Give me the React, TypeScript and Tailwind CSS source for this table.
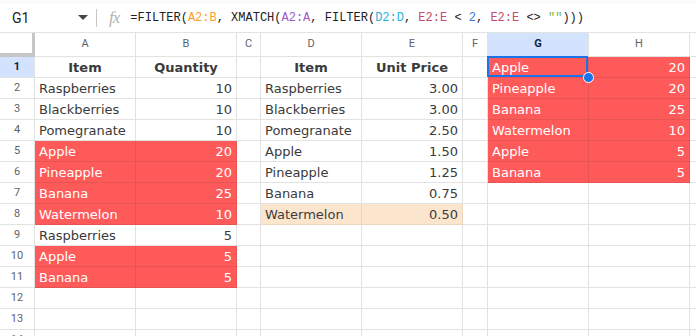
import React from 'react'

type Cell = { t?: string; bold?: boolean; right?: boolean; center?: boolean; fill?: 'red' | 'orange' }

const COLS = ['A', 'B', 'C', 'D', 'E', 'F', 'G', 'H', '']

const L = (t: string, fill?: 'red' | 'orange'): Cell => ({ t, fill })
const R = (t: string, fill?: 'red' | 'orange'): Cell => ({ t, right: true, fill })
const H = (t: string): Cell => ({ t, bold: true, center: true })
const E: Cell = {}

// rows 1..14, columns A..I
const ROWS: Cell[][] = [
  [H('Item'), H('Quantity'), E, H('Item'), H('Unit Price'), E, L('Apple', 'red'), R('20', 'red'), E],
  [L('Raspberries'), R('10'), E, L('Raspberries'), R('3.00'), E, L('Pineapple', 'red'), R('20', 'red'), E],
  [L('Blackberries'), R('10'), E, L('Blackberries'), R('3.00'), E, L('Banana', 'red'), R('25', 'red'), E],
  [L('Pomegranate'), R('10'), E, L('Pomegranate'), R('2.50'), E, L('Watermelon', 'red'), R('10', 'red'), E],
  [L('Apple', 'red'), R('20', 'red'), E, L('Apple'), R('1.50'), E, L('Apple', 'red'), R('5', 'red'), E],
  [L('Pineapple', 'red'), R('20', 'red'), E, L('Pineapple'), R('1.25'), E, L('Banana', 'red'), R('5', 'red'), E],
  [L('Banana', 'red'), R('25', 'red'), E, L('Banana'), R('0.75'), E, E, E, E],
  [L('Watermelon', 'red'), R('10', 'red'), E, L('Watermelon', 'orange'), R('0.50', 'orange'), E, E, E, E],
  [L('Raspberries'), R('5'), E, E, E, E, E, E, E],
  [L('Apple', 'red'), R('5', 'red'), E, E, E, E, E, E, E],
  [L('Banana', 'red'), R('5', 'red'), E, E, E, E, E, E, E],
  [E, E, E, E, E, E, E, E, E],
  [E, E, E, E, E, E, E, E, E],
  [E, E, E, E, E, E, E, E, E],
]

function DataCell({ c, selected }: { c: Cell; selected?: boolean }) {
  const bg =
    c.fill === 'red'
      ? 'bg-[#ff5a5a] text-white border-[#e85454]'
      : c.fill === 'orange'
        ? 'bg-[#fce5cd] text-[#3c3c3c] border-[#ecd6bf]'
        : 'bg-white text-[#3a3a3a] border-[#e2e2e2]'
  const align = c.center ? 'justify-center' : c.right ? 'justify-end' : 'justify-start'
  return (
    <div
      className={`relative h-[21px] flex items-center px-[4px] border-r border-b text-[13px] leading-none whitespace-nowrap ${bg} ${align} ${
        c.bold ? 'font-bold' : ''
      }`}
      style={{ fontFamily: '"DejaVu Sans", Verdana, sans-serif' }}
    >
      {c.t}
      {selected && (
        <>
          <div className="absolute -left-[1px] -top-[1px] right-0 bottom-0 border-2 border-[#1a73e8] pointer-events-none" />
          <div className="absolute -right-[6px] -bottom-[6px] w-[11px] h-[11px] rounded-full bg-[#1a73e8] border border-white z-10" />
        </>
      )}
    </div>
  )
}

export default function App() {
  return (
    <div
      className="w-[696px] h-[336px] overflow-hidden bg-white"
      style={{ fontFamily: 'Roboto, "Liberation Sans", sans-serif' }}
    >
      {/* formula bar */}
      <div className="h-[4px] bg-[#f9fbfd]" />
      <div className="h-[29px] flex items-center border-b border-[#e1e3e1] bg-white">
        <div className="w-[96px] flex items-center pl-[12px] pr-[8px]">
          <span className="text-[14px] text-[#202124]">G1</span>
          <svg className="ml-auto" width="10" height="6" viewBox="0 0 10 6">
            <path d="M0 0 L10 0 L5 5 Z" fill="#444746" />
          </svg>
        </div>
        <div className="w-px h-[18px] bg-[#c4c7c5]" />
        <span
          className="ml-[12px] text-[17px] italic text-[#b0b3b6] tracking-[-1px]"
          style={{ fontFamily: '"Liberation Serif", serif' }}
        >
          fx
        </span>
        <div
          className="ml-[11px] text-[12px] text-[#202124] whitespace-pre"
          style={{ fontFamily: '"Liberation Mono", "DejaVu Sans Mono", monospace' }}
        >
          =FILTER(<span className="text-[#f4a12a]">A2:B</span>, XMATCH(
          <span className="text-[#9c5bc4]">A2:A</span>, FILTER(<span className="text-[#2ab3d4]">D2:D</span>,{' '}
          <span className="text-[#c44a70]">E2:E</span> {'<'} <span className="text-[#3c78d8]">2</span>,{' '}
          <span className="text-[#c44a70]">E2:E</span> {'<>'} <span className="text-[#7cb342]">""</span>)))
        </div>
      </div>

      {/* sheet */}
      <div className="grid grid-cols-[35px_101px_101px_24px_101px_101px_25px_101px_101px_60px]">
        {/* column headers */}
        <div className="h-[24px] bg-white border-r-[3px] border-b-[4px] border-[#c4c7c5]" />
        {COLS.map((c) => (
          <div
            key={'h' + c}
            className={`h-[24px] flex items-center justify-center border-r border-b border-[#e1e3e1] text-[11px] ${
              c === 'G' ? 'bg-[#d3e3fd] text-[#0b1f44] font-bold' : 'bg-white text-[#5f6368]'
            }`}
          >
            {c}
          </div>
        ))}

        {ROWS.map((row, r) => (
          <React.Fragment key={r}>
            <div
              className={`h-[21px] flex items-center justify-center border-r border-b border-[#e1e3e1] text-[11px] ${
                r === 0 ? 'bg-[#d3e3fd] text-[#0b1f44] font-bold' : 'bg-white text-[#5f6368]'
              }`}
            >
              {r + 1}
            </div>
            {row.map((c, i) => (
              <DataCell key={i} c={c} selected={r === 0 && i === 6} />
            ))}
          </React.Fragment>
        ))}
      </div>
    </div>
  )
}
